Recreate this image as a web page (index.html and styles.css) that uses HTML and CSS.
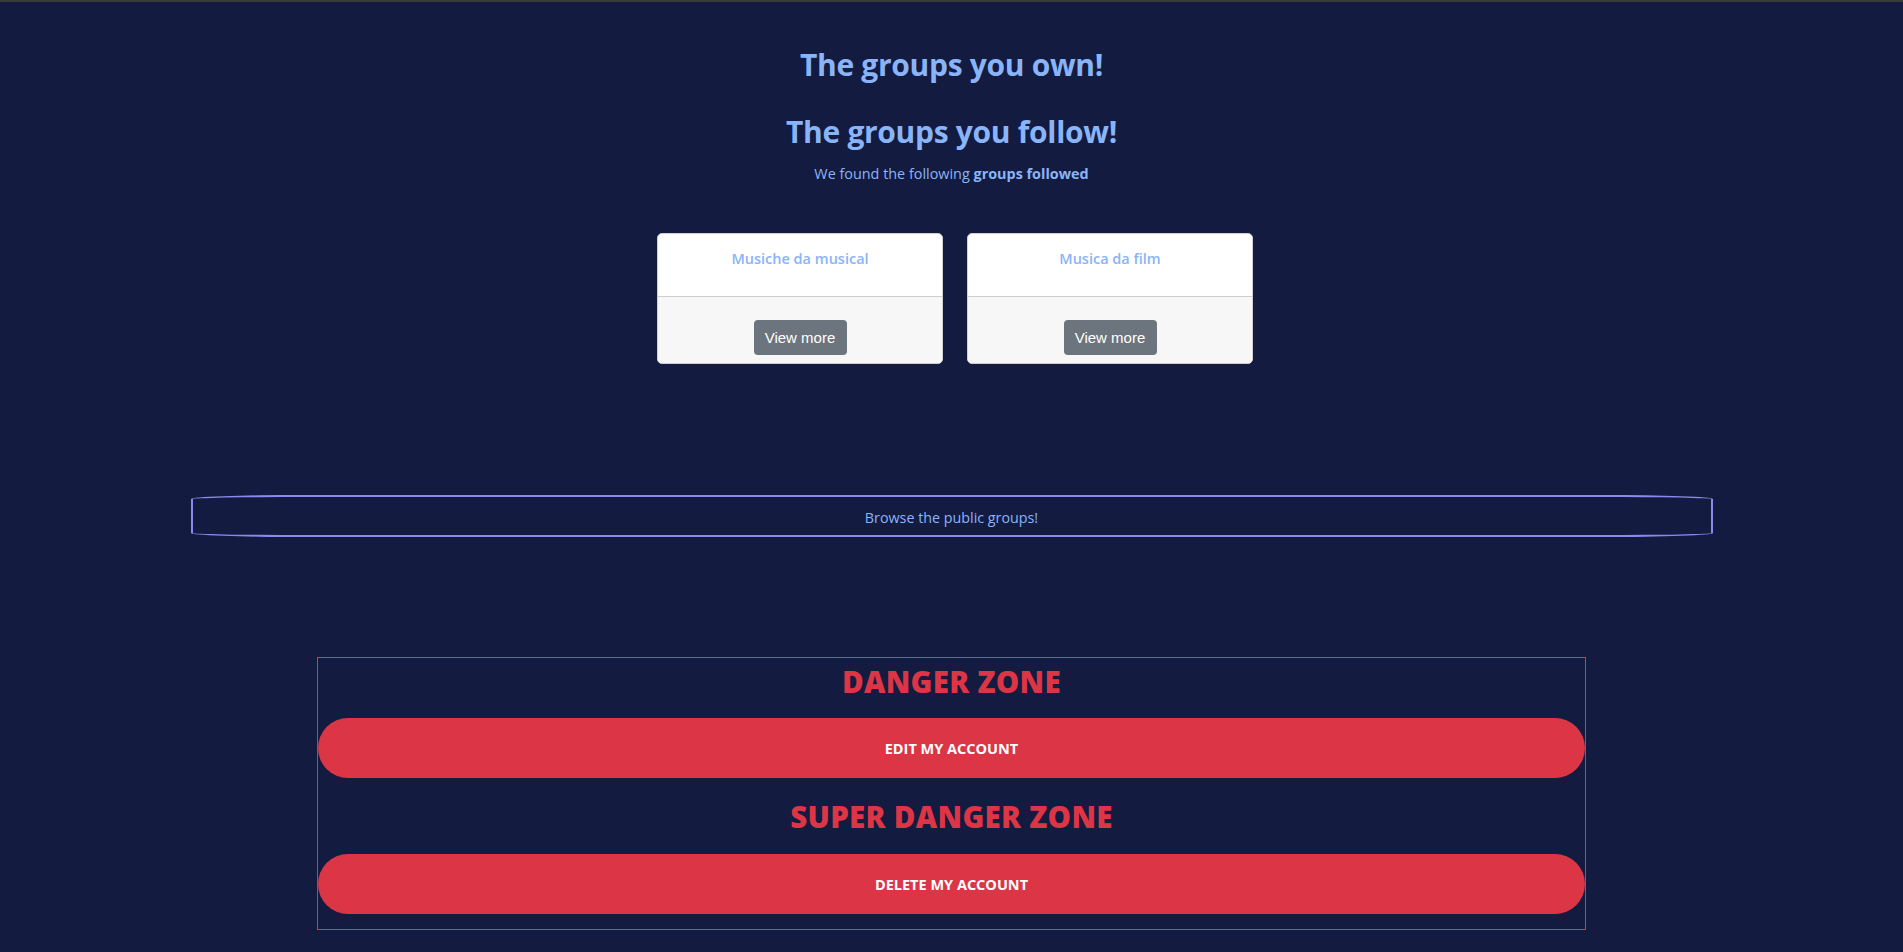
FILE: index.html
```html
<!DOCTYPE html>
<html lang="en">
<head>
<meta charset="utf-8">
<title>Groups</title>
<link rel="stylesheet" href="styles.css">
</head>
<body>
<main class="page">
  <h2 class="title title-own">The groups you own!</h2>
  <h2 class="title title-follow">The groups you follow!</h2>
  <p class="lead">We found the following <b>groups followed</b></p>

  <div class="cards">
    <div class="card">
      <div class="card-head">Musiche da musical</div>
      <div class="card-foot"><a class="btn-view" href="#">View more</a></div>
    </div>
    <div class="card">
      <div class="card-head">Musica da film</div>
      <div class="card-foot"><a class="btn-view" href="#">View more</a></div>
    </div>
  </div>

  <div class="browse-wrap">
    <a class="browse" href="#">Browse the public groups!</a>
  </div>

  <section class="danger">
    <h3 class="danger-title">DANGER ZONE</h3>
    <a class="danger-btn" href="#">EDIT MY ACCOUNT</a>
    <h3 class="danger-title super">SUPER DANGER ZONE</h3>
    <a class="danger-btn" href="#">DELETE MY ACCOUNT</a>
  </section>
</main>
</body>
</html>
```

FILE: styles.css
```css
* { box-sizing: border-box; }

html, body {
  margin: 0;
  padding: 0;
}

body {
  background: #131b40;
  border-top: 2px solid #3a3a3a;
  font-family: "Open Sans", "Noto Sans", "Liberation Sans", sans-serif;
  color: #8ab4f8;
  min-height: 952px;
}

.page {
  display: flex;
  flex-direction: column;
  align-items: center;
}

.title {
  margin: 0;
  font-weight: 700;
  font-size: 30px;
  line-height: 36px;
  color: #8ab4f8;
  text-align: center;
  letter-spacing: -0.3px;
}

.title-own { margin-top: 45px; }
.title-follow { margin-top: 31px; }

.lead {
  margin: 14px 0 0;
  font-size: 14.4px;
  line-height: 20px;
  color: #8ab4f8;
}
.lead b { font-weight: 700; }

.cards {
  display: flex;
  gap: 24px;
  margin-top: 49px;
  padding-left: 7px;
}

.card {
  width: 286px;
  height: 131px;
  border-radius: 5px;
  border: 1px solid #d0d0d0;
  background: #fff;
  display: flex;
  flex-direction: column;
  overflow: hidden;
}

.card-head {
  height: 63px;
  padding-top: 15px;
  text-align: center;
  font-size: 14.5px;
  font-weight: 600;
  color: #8ab4f8;
  border-bottom: 1px solid #cfcfcf;
}

.card-foot {
  flex: 1;
  background: #f7f7f7;
  display: flex;
  justify-content: center;
  padding-top: 23px;
}

.btn-view {
  display: inline-flex;
  align-items: center;
  justify-content: center;
  width: 93px;
  height: 35px;
  background: #6c757d;
  color: #fff;
  border-radius: 4px;
  font-size: 15px;
  text-decoration: none;
  font-family: "Liberation Sans", "Open Sans", sans-serif;
}

.browse-wrap {
  align-self: stretch;
  display: flex;
  justify-content: center;
  margin-top: 131px;
}

.browse {
  width: 1522px;
  height: 42px;
  padding-top: 3px;
  border: 2px solid #8a8af0;
  border-radius: 110px / 4px;
  display: flex;
  align-items: center;
  justify-content: center;
  color: #8ab4f8;
  font-size: 14.3px;
  text-decoration: none;
}

.danger {
  width: 1269px;
  margin-top: 120px;
  border: 1px solid #dc3545;
  display: flex;
  flex-direction: column;
  align-items: stretch;
  padding-bottom: 15px;
  margin-bottom: 24px;
}

.danger-title {
  margin: 0;
  text-align: center;
  color: #dc3545;
  font-weight: 800;
  font-size: 29.5px;
  line-height: 38px;
  margin-top: 5px;
  margin-bottom: 17px;
  letter-spacing: 0.3px;
}

.danger-title.super {
  margin-top: 20px;
  margin-bottom: 18px;
}

.danger-btn {
  display: flex;
  align-items: center;
  justify-content: center;
  height: 60px;
  border-radius: 30px;
  background: #dc3545;
  color: #fff;
  font-weight: 700;
  font-size: 14.5px;
  text-decoration: none;
}
```
